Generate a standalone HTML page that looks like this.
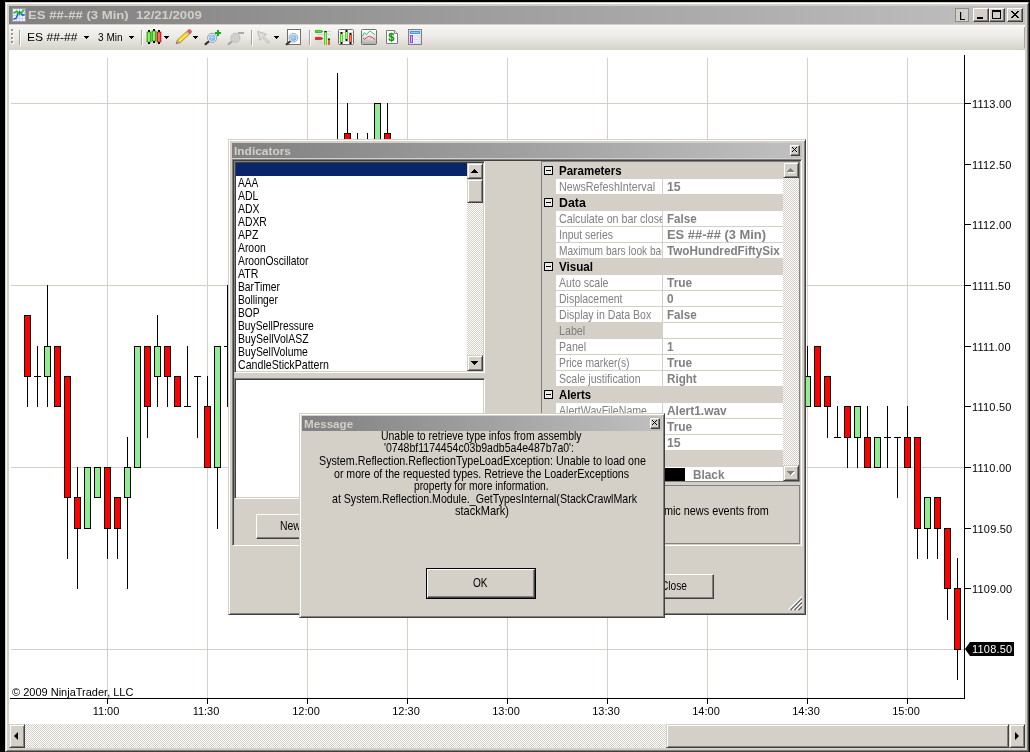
<!DOCTYPE html>
<html><head><meta charset="utf-8"><title>ES ##-## (3 Min)</title>
<style>
*{margin:0;padding:0;box-sizing:border-box}
html,body{width:1030px;height:752px;overflow:hidden;background:#000}
body{position:relative;font-family:"Liberation Sans",sans-serif;font-size:11px;color:#000}
i,span,div,b{position:absolute;display:block;font-style:normal;white-space:nowrap}
.face{background:#d4d0c8}
/* chart */
.w{width:1px;background:#000}
.b{width:7px;border:1px solid #000;box-sizing:content-box;width:5px}
.dj{width:7px;height:1px;background:#000}
.gv{top:58px;width:1px;height:640px;background:#d4d0c8}
.gh{left:11px;width:953px;height:1px;background:#d4d0c8}
.pt{left:965px;width:6px;height:1px;background:#000}
.pl{left:972px;font-size:11px;line-height:14px;letter-spacing:0.2px}
.tt{top:698px;width:1px;height:6px;background:#000}
.tl{top:704px;width:60px;text-align:center;font-size:11px;line-height:14px}
.chk{background-color:#fff;background-image:conic-gradient(#d4d0c8 25%,#fff 0 50%,#d4d0c8 0 75%,#fff 0);background-size:2px 2px}
/* raised button */
.rb{background:#d4d0c8;border:1px solid;border-color:#d4d0c8 #404040 #404040 #d4d0c8;box-shadow:inset 1px 1px 0 #fff,inset -1px -1px 0 #808080}
.rb2{background:#d4d0c8;border:1px solid;border-color:#fff #404040 #404040 #fff;box-shadow:inset -1px -1px 0 #808080}
.win{background:#d4d0c8;border:1px solid;border-color:#d4d0c8 #404040 #404040 #d4d0c8;box-shadow:inset 1px 1px 0 #fff,inset -1px -1px 0 #808080}
.sunk{border:1px solid;border-color:#808080 #fff #fff #808080;box-shadow:inset 1px 1px 0 #404040,inset -1px -1px 0 #d4d0c8}
.cap{font-weight:bold;color:#d4d0c8;font-size:11px;line-height:14px}
.ms{font-size:13px;line-height:13px}
.pgc{font-weight:bold;line-height:16px}
.pgn{color:#808080;line-height:16px}
.pgv{color:#808080;font-weight:bold;line-height:16px}
.mc{left:-220px;width:800px;text-align:center}
#root{left:0;top:0;width:1030px;height:752px;will-change:transform}
</style></head><body><div id="root">
<!-- main window frame -->
<div class="face" style="left:5px;top:2px;width:1024px;height:750px;border:1px solid;border-color:#d4d0c8 #404040 #404040 #d4d0c8;box-shadow:inset 1px 1px 0 #fff,inset -1px -1px 0 #808080"></div>
<!-- title bar -->
<div id="title" style="left:9px;top:6px;width:1016px;height:18px;background:linear-gradient(90deg,#808080,#c0c0c0)"></div>
<span id="ttext" style="transform:scaleX(1.194);transform-origin:0 0;left:28px;top:8px;font-weight:bold;color:#d4d0c8;font-size:11px;line-height:14px">ES ##-## (3 Min)&nbsp; 12/21/2009</span>
<svg style="position:absolute;left:12px;top:8px" width="14" height="14" viewBox="0 0 14 14"><rect x="0" y="0" width="14" height="14" fill="#9a9ab4"/><rect x="1" y="1" width="12" height="12" fill="#f4f2fb"/><path d="M4.5 1v12M7.5 1v12M10.5 1v12M1 4.5h12M1 7.5h12M1 10.5h12" stroke="#cfcfe6" stroke-width="1" fill="none"/><path d="M1.5 11.5L4.5 9.8L6 5.5L7.5 3.6L10.5 7.2L12.7 6.5" stroke="#1060e0" stroke-width="1.5" fill="none"/><path d="M1.5 5.3L4.7 3.3L7.5 6.3L12.5 1.5" stroke="#20c010" stroke-width="1.6" fill="none"/></svg>
<div style="left:955px;top:8px;width:14px;height:14px;background:#d4d0c8;border:1px solid #8c8c8c"></div>
<svg style="position:absolute;left:959px;top:12px" width="7" height="8"><path d="M1 0h1.2v7h3.8v1h-5z" fill="#000"/></svg>
<div class="rb2" style="left:973px;top:8px;width:16px;height:14px"></div>
<i style="left:977px;top:17px;width:6px;height:2px;background:#000"></i>
<div class="rb2" style="left:989px;top:8px;width:16px;height:14px"></div>
<div style="left:992px;top:10px;width:9px;height:9px;border:1px solid #000;border-top-width:2px"></div>
<div class="rb2" style="left:1007px;top:8px;width:16px;height:14px"></div>
<svg style="position:absolute;left:1011px;top:11px" width="8" height="7"><path d="M0 0h2v1h-2zM6 0h2v1h-2zM1 1h2v1h-2zM5 1h2v1h-2zM2 2h4v1h-4zM3 3h2v1h-2zM2 4h4v1h-4zM1 5h2v1h-2zM5 5h2v1h-2zM0 6h2v1h-2zM6 6h2v1h-2z" fill="#000"/></svg>
<!-- toolbar -->
<div id="tb" style="left:9px;top:24px;width:1016px;height:26px;background:#d4d0c8"></div>
<div id="tbg" style="left:9px;top:25px;width:1015px;height:25px;background:linear-gradient(#f8f7f5,#ebe9e4 50%,#d6d2ca);border-radius:0 2px 3px 3px"></div>
<i style="left:1024px;top:27px;width:1px;height:21px;background:#aaa69e"></i><i style="left:1023px;top:25px;width:2px;height:2px;background:#fff"></i>
<span id="tb1" style="transform:scaleX(1.100);transform-origin:0 0;left:27px;top:30px;font-size:11px;line-height:14px">ES ##-##</span>
<span id="tb2" style="transform:scaleX(0.914);transform-origin:0 0;left:98px;top:30px;font-size:11px;line-height:14px">3 Min</span>
<svg style="position:absolute;left:0;top:0" width="1030" height="52" viewBox="0 0 1030 52">
<defs>
<linearGradient id="gg" x1="0" x2="1" y1="0" y2="0"><stop offset="0" stop-color="#2fb010"/><stop offset="0.45" stop-color="#a8ff78"/><stop offset="1" stop-color="#35c015"/></linearGradient>
<linearGradient id="gr" x1="0" x2="1" y1="0" y2="0"><stop offset="0" stop-color="#c81808"/><stop offset="0.45" stop-color="#ff8878"/><stop offset="1" stop-color="#d82010"/></linearGradient>
<linearGradient id="gc" x1="0" x2="0" y1="0" y2="1"><stop offset="0" stop-color="#ffffff"/><stop offset="0.5" stop-color="#e4e4e4"/><stop offset="1" stop-color="#a8a8a8"/></linearGradient>
<radialGradient id="gl" cx="0.45" cy="0.4" r="0.6"><stop offset="0" stop-color="#b8dcfa"/><stop offset="1" stop-color="#6eb0ea"/></radialGradient>
</defs>
<!-- grip -->
<g fill="#fff"><rect x="12" y="30" width="2" height="2"/><rect x="12" y="34" width="2" height="2"/><rect x="12" y="38" width="2" height="2"/><rect x="12" y="42" width="2" height="2"/></g>
<g fill="#9a968c"><rect x="11" y="29" width="2" height="2"/><rect x="11" y="33" width="2" height="2"/><rect x="11" y="37" width="2" height="2"/><rect x="11" y="41" width="2" height="2"/></g>
<!-- separators -->
<g fill="#a5a29a"><rect x="19" y="30" width="1" height="15"/><rect x="141" y="30" width="1" height="15"/><rect x="251" y="30" width="1" height="15"/><rect x="309" y="30" width="1" height="15"/></g>
<g fill="#fff"><rect x="20" y="31" width="1" height="15"/><rect x="142" y="31" width="1" height="15"/><rect x="252" y="31" width="1" height="15"/><rect x="310" y="31" width="1" height="15"/></g>
<!-- dropdown arrows -->
<g fill="#000">
<path d="M84 36h5v1h-5zM85 37h3v1h-3zM86 38h1v1h-1z"/>
<path d="M129 36h5v1h-5zM130 37h3v1h-3zM131 38h1v1h-1z"/>
<path d="M164 36h5v1h-5zM165 37h3v1h-3zM166 38h1v1h-1z"/>
<path d="M193 36h5v1h-5zM194 37h3v1h-3zM195 38h1v1h-1z"/>
<path d="M274 36h5v1h-5zM275 37h3v1h-3zM276 38h1v1h-1z"/>
</g>
<!-- chart style icon -->
<g>
<rect x="148" y="30" width="2" height="14" fill="#000"/><rect x="153" y="29" width="2" height="14" fill="#000"/><rect x="158" y="30" width="2" height="14" fill="#000"/>
<rect x="147" y="32" width="4" height="10" fill="url(#gg)" stroke="#1c7808" stroke-width="0.6"/>
<rect x="152" y="31" width="4" height="10" fill="url(#gg)" stroke="#1c7808" stroke-width="0.6"/>
<rect x="157" y="32" width="4" height="10" fill="url(#gr)" stroke="#901008" stroke-width="0.6"/>
</g>
<!-- pencil -->
<g transform="translate(176.2,43.6) rotate(-42)">
<path d="M0 0 L3.2 -2 L3.2 2 Z" fill="#c9a98a" stroke="#777" stroke-width="0.5"/>
<path d="M0 0 L1.2 -0.75 L1.2 0.75 Z" fill="#333"/>
<rect x="3.2" y="-2" width="12.3" height="4" fill="#f7d416" stroke="#8a7a30" stroke-width="0.6"/>
<rect x="3.2" y="-0.6" width="12.3" height="1.2" fill="#ffe860"/>
<rect x="15.5" y="-2" width="1.2" height="4" fill="#c8c8c8" stroke="#888" stroke-width="0.4"/>
<path d="M16.7 -2 h1.6 a1.6 2 0 0 1 0 4 h-1.6z" fill="#f05565" stroke="#b03040" stroke-width="0.4"/>
</g>
<!-- zoom in -->
<path d="M209.3 41 L205.6 44.2" stroke="#333" stroke-width="2.2" stroke-linecap="round"/>
<circle cx="212.2" cy="37.8" r="4.6" fill="#f4f4f4" stroke="#9a9a9a" stroke-width="1"/>
<circle cx="212.2" cy="37.8" r="3.2" fill="url(#gl)"/>
<path d="M215 32h6v2h-6zM217 30h2v6h-2z" fill="#08b020"/>
<!-- zoom out disabled -->
<path d="M232.3 41 L228.6 44.2" stroke="#a8a8a8" stroke-width="2.2" stroke-linecap="round"/>
<circle cx="235.4" cy="37.8" r="4.6" fill="#cfcfcf" stroke="#c0c0c0" stroke-width="1"/>
<rect x="238" y="32" width="6" height="2" fill="#a8a8a8"/>
<!-- cursor -->
<path d="M257.6 31.3 L266.4 34.2 L263.6 36.2 L269.3 42 L268 43.4 L262.2 37.6 L260 40.4 Z" fill="#dedede" stroke="#b0b0b0" stroke-width="0.8" stroke-linejoin="round"/>
<!-- zoom box -->
<rect x="287.5" y="29.5" width="13" height="15" fill="#fff" stroke="#707070" stroke-width="1"/>
<path d="M290.3 41.2 L286.6 44.3" stroke="#333" stroke-width="2" stroke-linecap="round"/>
<circle cx="293.4" cy="37.8" r="4.4" fill="#f0f0f0" stroke="#a8a8a8" stroke-width="1"/>
<circle cx="293.4" cy="37.8" r="3.1" fill="url(#gl)"/>
<!-- icon A -->
<g>
<path d="M327 31.5h4M317 34.5h14M327 38.5h4M317 42.5h6" stroke="#d4d4d4" stroke-width="1"/>
<path d="M315.5 30.4h5.6l1.8 1.1l-1.8 1.1h-5.6z" fill="#48e818" stroke="#289010" stroke-width="0.7"/>
<path d="M315.5 37.4h5.6l1.8 1.1l-1.8 1.1h-5.6z" fill="#f02818" stroke="#a01810" stroke-width="0.7"/>
<rect x="324" y="31" width="3" height="14" fill="url(#gg)"/><rect x="324.5" y="31" width="2" height="1.3" fill="#111"/>
<rect x="328" y="39" width="2" height="6" fill="url(#gr)"/><rect x="328" y="38.6" width="2" height="1.2" fill="#111"/>
</g>
<!-- icon B -->
<g>
<rect x="338.5" y="29.5" width="15" height="15" rx="1" fill="#fff" stroke="#707070"/>
<path d="M339 32.5h14M339 35.5h14M339 38.5h14M339 41.5h14" stroke="#dcdcdc" stroke-width="1"/>
<rect x="340.5" y="32" width="2" height="12" fill="#000"/><rect x="345.5" y="30" width="2" height="11" fill="#000"/><rect x="349.5" y="33" width="2" height="11" fill="#000"/>
<rect x="340" y="34" width="3" height="8" fill="url(#gg)"/><rect x="345" y="32" width="3" height="7" fill="url(#gg)"/><rect x="349" y="35" width="3" height="7" fill="url(#gr)"/>
</g>
<!-- icon C -->
<g>
<rect x="361.5" y="29.5" width="15" height="15" rx="1" fill="url(#gc)" stroke="#707070"/>
<path d="M362.3 36.5L364.4 32.6L366.1 34.7L370 31L374.9 34.7" stroke="#30b870" stroke-width="0.9" fill="none"/>
<path d="M363 37.9L364.4 39.3L368.2 36.5L372.1 37.2L375.2 39.6" stroke="#e83040" stroke-width="0.9" fill="none"/>
</g>
<!-- icon D -->
<g>
<path d="M386.5 30.5h8l3 3v10h-11z" fill="#fff" stroke="#7c7c7c"/>
<path d="M394.5 30.5v3h3" fill="#e8e8e8" stroke="#707070" stroke-width="0.8"/>
<text x="388.6" y="40.9" font-family="Liberation Sans, sans-serif" font-weight="bold" font-size="10.5" fill="#139a13" stroke="#139a13" stroke-width="0.3">$</text>
</g>
<!-- icon E -->
<g>
<rect x="408.5" y="29.5" width="13" height="15" fill="#fff" stroke="#808080"/>
<rect x="409.5" y="30.5" width="11" height="13" fill="none" stroke="#dcd8f4" stroke-width="1"/>
<rect x="410" y="31" width="10" height="3" fill="#3f9ee0"/><rect x="411" y="32" width="8" height="1" fill="#8cc8f0"/>
<rect x="410" y="35" width="3" height="8" fill="#a040ff"/><rect x="411" y="36" width="1" height="6" fill="#cdb8ff"/>
<rect x="414" y="35" width="6" height="8" fill="#eef0fa"/><path d="M414 35.5h6M414 37.5h2M417 37.5h3M414 39.5h4M419 39.5h1M414 41.5h2M417 41.5h3" stroke="#d2d8ee" stroke-width="1"/>
</g>
</svg>

<!-- chart bg -->
<div style="left:9px;top:50px;width:1016px;height:674px;background:#fff"></div>
<i class="gv" style="left:107px"></i>
<i class="gv" style="left:207px"></i>
<i class="gv" style="left:307px"></i>
<i class="gv" style="left:407px"></i>
<i class="gv" style="left:507px"></i>
<i class="gv" style="left:607px"></i>
<i class="gv" style="left:707px"></i>
<i class="gv" style="left:807px"></i>
<i class="gv" style="left:907px"></i>
<i class="gh" style="top:103px"></i>
<i class="gh" style="top:285px"></i>
<i class="gh" style="top:467px"></i>
<i class="gh" style="top:649px"></i>
<i class="w" style="left:27px;top:315px;height:92px"></i>
<i class="b" style="left:24px;top:315px;height:60px;background:#ff0000"></i>
<i class="w" style="left:37px;top:346px;height:61px"></i>
<i class="dj" style="left:34px;top:376px"></i>
<i class="w" style="left:47px;top:285px;height:122px"></i>
<i class="b" style="left:44px;top:346px;height:29px;background:#90ee90"></i>
<i class="w" style="left:57px;top:346px;height:61px"></i>
<i class="b" style="left:54px;top:346px;height:59px;background:#ff0000"></i>
<i class="w" style="left:67px;top:376px;height:183px"></i>
<i class="b" style="left:64px;top:376px;height:120px;background:#ff0000"></i>
<i class="w" style="left:77px;top:467px;height:122px"></i>
<i class="b" style="left:74px;top:497px;height:30px;background:#ff0000"></i>
<i class="w" style="left:87px;top:467px;height:62px"></i>
<i class="b" style="left:84px;top:467px;height:60px;background:#90ee90"></i>
<i class="w" style="left:97px;top:467px;height:31px"></i>
<i class="b" style="left:94px;top:467px;height:29px;background:#90ee90"></i>
<i class="w" style="left:107px;top:467px;height:92px"></i>
<i class="b" style="left:104px;top:467px;height:60px;background:#ff0000"></i>
<i class="w" style="left:117px;top:497px;height:62px"></i>
<i class="b" style="left:114px;top:497px;height:30px;background:#ff0000"></i>
<i class="w" style="left:127px;top:437px;height:152px"></i>
<i class="b" style="left:124px;top:467px;height:29px;background:#90ee90"></i>
<i class="w" style="left:137px;top:346px;height:122px"></i>
<i class="b" style="left:134px;top:346px;height:120px;background:#90ee90"></i>
<i class="w" style="left:147px;top:346px;height:92px"></i>
<i class="b" style="left:144px;top:346px;height:59px;background:#ff0000"></i>
<i class="w" style="left:157px;top:315px;height:92px"></i>
<i class="b" style="left:154px;top:346px;height:29px;background:#90ee90"></i>
<i class="w" style="left:167px;top:346px;height:61px"></i>
<i class="b" style="left:164px;top:346px;height:29px;background:#ff0000"></i>
<i class="w" style="left:177px;top:376px;height:31px"></i>
<i class="b" style="left:174px;top:376px;height:29px;background:#ff0000"></i>
<i class="w" style="left:187px;top:346px;height:61px"></i>
<i class="dj" style="left:184px;top:406px"></i>
<i class="w" style="left:197px;top:376px;height:62px"></i>
<i class="dj" style="left:194px;top:376px"></i>
<i class="w" style="left:207px;top:376px;height:92px"></i>
<i class="b" style="left:204px;top:406px;height:60px;background:#ff0000"></i>
<i class="w" style="left:217px;top:346px;height:183px"></i>
<i class="b" style="left:214px;top:346px;height:120px;background:#90ee90"></i>
<i class="w" style="left:227px;top:285px;height:122px"></i>
<i class="dj" style="left:224px;top:346px"></i>
<i class="w" style="left:337px;top:73px;height:152px"></i>
<i class="dj" style="left:334px;top:164px"></i>
<i class="w" style="left:347px;top:103px;height:92px"></i>
<i class="b" style="left:344px;top:133px;height:60px;background:#ff0000"></i>
<i class="w" style="left:357px;top:133px;height:62px"></i>
<i class="dj" style="left:354px;top:164px"></i>
<i class="w" style="left:367px;top:133px;height:62px"></i>
<i class="dj" style="left:364px;top:164px"></i>
<i class="w" style="left:377px;top:103px;height:62px"></i>
<i class="b" style="left:374px;top:103px;height:60px;background:#90ee90"></i>
<i class="w" style="left:387px;top:103px;height:62px"></i>
<i class="b" style="left:384px;top:133px;height:30px;background:#ff0000"></i>
<i class="w" style="left:807px;top:346px;height:61px"></i>
<i class="b" style="left:804px;top:376px;height:29px;background:#90ee90"></i>
<i class="w" style="left:817px;top:346px;height:61px"></i>
<i class="b" style="left:814px;top:346px;height:59px;background:#ff0000"></i>
<i class="w" style="left:827px;top:376px;height:62px"></i>
<i class="b" style="left:824px;top:376px;height:29px;background:#ff0000"></i>
<i class="w" style="left:837px;top:406px;height:32px"></i>
<i class="dj" style="left:834px;top:437px"></i>
<i class="w" style="left:847px;top:406px;height:62px"></i>
<i class="b" style="left:844px;top:406px;height:30px;background:#ff0000"></i>
<i class="w" style="left:857px;top:406px;height:62px"></i>
<i class="b" style="left:854px;top:406px;height:30px;background:#90ee90"></i>
<i class="w" style="left:867px;top:406px;height:62px"></i>
<i class="b" style="left:864px;top:437px;height:29px;background:#ff0000"></i>
<i class="w" style="left:877px;top:437px;height:31px"></i>
<i class="b" style="left:874px;top:437px;height:29px;background:#90ee90"></i>
<i class="w" style="left:887px;top:406px;height:62px"></i>
<i class="dj" style="left:884px;top:437px"></i>
<i class="w" style="left:897px;top:437px;height:61px"></i>
<i class="dj" style="left:894px;top:437px"></i>
<i class="w" style="left:907px;top:406px;height:62px"></i>
<i class="b" style="left:904px;top:437px;height:29px;background:#ff0000"></i>
<i class="w" style="left:917px;top:437px;height:122px"></i>
<i class="b" style="left:914px;top:437px;height:90px;background:#ff0000"></i>
<i class="w" style="left:927px;top:497px;height:62px"></i>
<i class="b" style="left:924px;top:497px;height:30px;background:#90ee90"></i>
<i class="w" style="left:937px;top:497px;height:62px"></i>
<i class="b" style="left:934px;top:497px;height:30px;background:#ff0000"></i>
<i class="w" style="left:947px;top:528px;height:92px"></i>
<i class="b" style="left:944px;top:528px;height:59px;background:#ff0000"></i>
<i class="w" style="left:957px;top:558px;height:122px"></i>
<i class="b" style="left:954px;top:588px;height:60px;background:#ff0000"></i>
<i style="left:964px;top:55px;width:1px;height:644px;background:#000"></i>
<i style="left:10px;top:698px;width:955px;height:1px;background:#000"></i>
<i class="pt" style="top:103px"></i><span class="pl" style="top:97px">1113.00</span>
<i class="pt" style="top:164px"></i><span class="pl" style="top:158px">1112.50</span>
<i class="pt" style="top:224px"></i><span class="pl" style="top:218px">1112.00</span>
<i class="pt" style="top:285px"></i><span class="pl" style="top:279px">1111.50</span>
<i class="pt" style="top:346px"></i><span class="pl" style="top:340px">1111.00</span>
<i class="pt" style="top:406px"></i><span class="pl" style="top:400px">1110.50</span>
<i class="pt" style="top:467px"></i><span class="pl" style="top:461px">1110.00</span>
<i class="pt" style="top:528px"></i><span class="pl" style="top:522px">1109.50</span>
<i class="pt" style="top:588px"></i><span class="pl" style="top:582px">1109.00</span>
<i class="tt" style="left:107px"></i><span class="tl" style="left:76px">11:00</span>
<i class="tt" style="left:207px"></i><span class="tl" style="left:176px">11:30</span>
<i class="tt" style="left:307px"></i><span class="tl" style="left:276px">12:00</span>
<i class="tt" style="left:407px"></i><span class="tl" style="left:376px">12:30</span>
<i class="tt" style="left:507px"></i><span class="tl" style="left:476px">13:00</span>
<i class="tt" style="left:607px"></i><span class="tl" style="left:576px">13:30</span>
<i class="tt" style="left:707px"></i><span class="tl" style="left:676px">14:00</span>
<i class="tt" style="left:807px"></i><span class="tl" style="left:776px">14:30</span>
<i class="tt" style="left:907px"></i><span class="tl" style="left:876px">15:00</span>
<span id="copy" style="left:12px;top:685px;font-size:11px;line-height:14px">© 2009 NinjaTrader, LLC</span>
<!-- price marker -->
<svg style="position:absolute;left:964px;top:641px" width="52" height="16"><path d="M1 8 L6 1 H50 V15 H6 Z" fill="#000"/></svg>
<span style="left:972px;top:642px;color:#fff;font-size:11px;line-height:14px;letter-spacing:0.2px">1108.50</span>
<!-- h scrollbar -->
<div class="chk" style="left:9px;top:724px;width:1016px;height:24px"></div>
<div class="rb" style="left:9px;top:724px;width:16px;height:24px"></div>
<svg style="position:absolute;left:14px;top:732px" width="5" height="8"><path d="M4 0 V8 L0 4 Z" fill="#000"/></svg>
<div class="rb" style="left:1009px;top:724px;width:16px;height:24px"></div>
<svg style="position:absolute;left:1015px;top:732px" width="5" height="8"><path d="M0 0 V8 L4 4 Z" fill="#000"/></svg>
<div class="rb" style="left:666px;top:724px;width:343px;height:24px"></div>
<!-- ===== Indicators dialog ===== -->
<div class="win" style="left:228px;top:139px;width:578px;height:476px"></div>
<div style="left:232px;top:143px;width:570px;height:15px;background:linear-gradient(90deg,#808080,#c0c0c0)"></div>
<span id="t_ind" class="cap" style="transform:scaleX(1.084);transform-origin:0 0;left:234px;top:144px">Indicators</span>
<div class="rb2" style="left:790px;top:145px;width:10px;height:11px"></div>
<svg style="position:absolute;left:792px;top:147px" width="5" height="5"><path d="M0 0h1v1h-1zM4 0h1v1h-1zM1 1h1v1h-1zM3 1h1v1h-1zM2 2h1v1h-1zM1 3h1v1h-1zM3 3h1v1h-1zM0 4h1v1h-1zM4 4h1v1h-1z" fill="#000"/></svg>
<!-- sunken panel -->
<div class="sunk" style="left:232px;top:159px;width:570px;height:387px;background:#d4d0c8"></div>
<!-- list box -->
<div class="sunk" style="left:234px;top:161px;width:251px;height:212px;background:#fff"></div>
<div style="left:236px;top:163px;width:231px;height:13px;background:#0a246a"></div>
<span class="ms" style="transform:scaleX(0.785);transform-origin:0 0;left:238px;top:176px">AAA</span>
<span class="ms" style="transform:scaleX(0.806);transform-origin:0 0;left:238px;top:189px">ADL</span>
<span class="ms" style="transform:scaleX(0.809);transform-origin:0 0;left:238px;top:202px">ADX</span>
<span class="ms" style="transform:scaleX(0.798);transform-origin:0 0;left:238px;top:215px">ADXR</span>
<span class="ms" style="transform:scaleX(0.806);transform-origin:0 0;left:238px;top:228px">APZ</span>
<span class="ms" style="transform:scaleX(0.798);transform-origin:0 0;left:238px;top:241px">Aroon</span>
<span class="ms" style="transform:scaleX(0.793);transform-origin:0 0;left:238px;top:254px">AroonOscillator</span>
<span class="ms" style="transform:scaleX(0.816);transform-origin:0 0;left:238px;top:267px">ATR</span>
<span class="ms" style="transform:scaleX(0.792);transform-origin:0 0;left:238px;top:280px">BarTimer</span>
<span class="ms" style="transform:scaleX(0.789);transform-origin:0 0;left:238px;top:293px">Bollinger</span>
<span class="ms" style="transform:scaleX(0.785);transform-origin:0 0;left:238px;top:306px">BOP</span>
<span class="ms" style="transform:scaleX(0.788);transform-origin:0 0;left:238px;top:319px">BuySellPressure</span>
<span class="ms" style="transform:scaleX(0.807);transform-origin:0 0;left:238px;top:332px">BuySellVolASZ</span>
<span class="ms" style="transform:scaleX(0.799);transform-origin:0 0;left:238px;top:345px">BuySellVolume</span>
<span class="ms" style="transform:scaleX(0.817);transform-origin:0 0;left:238px;top:358px">CandleStickPattern</span>
<div class="chk" style="left:467px;top:163px;width:16px;height:208px"></div>
<div class="rb" style="left:467px;top:163px;width:16px;height:16px"></div>
<svg style="position:absolute;left:471px;top:169px" width="7" height="4"><path d="M3 0h1v1h-1zM2 1h3v1h-3zM1 2h5v1h-5zM0 3h7v1h-7z" fill="#000"/></svg>
<div class="rb" style="left:467px;top:179px;width:16px;height:24px"></div>
<div class="rb" style="left:467px;top:355px;width:16px;height:16px"></div>
<svg style="position:absolute;left:471px;top:361px" width="7" height="4"><path d="M0 0h7v1h-7zM1 1h5v1h-5zM2 2h3v1h-3zM3 3h1v1h-1z" fill="#000"/></svg>
<!-- text box -->
<div class="sunk" style="left:234px;top:378px;width:251px;height:121px;background:#fff"></div>
<!-- New button -->
<div class="rb2" style="left:256px;top:514px;width:75px;height:25px"></div>
<span id="b_new" class="ms" style="transform:scaleX(0.800);transform-origin:0 0;left:280px;top:519px">New</span>
<!-- property grid -->
<div style="left:541px;top:161px;width:259px;height:321px;background:#d4d0c8;border:1px solid #808080"></div>
<svg style="position:absolute;left:544px;top:166px" width="9" height="9"><rect x="0.5" y="0.5" width="8" height="8" fill="#eceae6" stroke="#000"/><path d="M2 4h5v1h-5z" fill="#000"/></svg>
<span class="ms pgc" style="transform:scaleX(0.884);transform-origin:0 0;left:559px;top:163px">Parameters</span>
<div style="left:556px;top:179px;width:106px;height:15px;background:#fff;overflow:hidden"><span class="ms pgn" style="transform:scaleX(0.826);transform-origin:0 0;left:3px;top:0px">NewsRefeshInterval</span></div>
<div style="left:663px;top:179px;width:120px;height:15px;background:#fff;overflow:hidden"><span class="ms pgv" style="transform:scaleX(0.945);transform-origin:0 0;left:4px;top:0px">15</span></div>
<svg style="position:absolute;left:544px;top:198px" width="9" height="9"><rect x="0.5" y="0.5" width="8" height="8" fill="#eceae6" stroke="#000"/><path d="M2 4h5v1h-5z" fill="#000"/></svg>
<span class="ms pgc" style="transform:scaleX(0.950);transform-origin:0 0;left:559px;top:195px">Data</span>
<div style="left:556px;top:211px;width:106px;height:15px;background:#fff;overflow:hidden"><span class="ms pgn" style="transform:scaleX(0.824);transform-origin:0 0;left:3px;top:0px">Calculate on bar close</span></div>
<div style="left:663px;top:211px;width:120px;height:15px;background:#fff;overflow:hidden"><span class="ms pgv" style="transform:scaleX(0.892);transform-origin:0 0;left:4px;top:0px">False</span></div>
<div style="left:556px;top:227px;width:106px;height:15px;background:#fff;overflow:hidden"><span class="ms pgn" style="transform:scaleX(0.802);transform-origin:0 0;left:3px;top:0px">Input series</span></div>
<div style="left:663px;top:227px;width:120px;height:15px;background:#fff;overflow:hidden"><span class="ms pgv" style="transform:scaleX(0.993);transform-origin:0 0;left:4px;top:0px">ES ##-## (3 Min)</span></div>
<div style="left:556px;top:243px;width:106px;height:15px;background:#fff;overflow:hidden"><span class="ms pgn" style="transform:scaleX(0.782);transform-origin:0 0;left:3px;top:0px">Maximum bars look back</span></div>
<div style="left:663px;top:243px;width:120px;height:15px;background:#fff;overflow:hidden"><span class="ms pgv" style="transform:scaleX(0.899);transform-origin:0 0;left:4px;top:0px">TwoHundredFiftySix</span></div>
<svg style="position:absolute;left:544px;top:262px" width="9" height="9"><rect x="0.5" y="0.5" width="8" height="8" fill="#eceae6" stroke="#000"/><path d="M2 4h5v1h-5z" fill="#000"/></svg>
<span class="ms pgc" style="transform:scaleX(0.895);transform-origin:0 0;left:559px;top:259px">Visual</span>
<div style="left:556px;top:275px;width:106px;height:15px;background:#fff;overflow:hidden"><span class="ms pgn" style="transform:scaleX(0.815);transform-origin:0 0;left:3px;top:0px">Auto scale</span></div>
<div style="left:663px;top:275px;width:120px;height:15px;background:#fff;overflow:hidden"><span class="ms pgv" style="transform:scaleX(0.920);transform-origin:0 0;left:4px;top:0px">True</span></div>
<div style="left:556px;top:291px;width:106px;height:15px;background:#fff;overflow:hidden"><span class="ms pgn" style="transform:scaleX(0.806);transform-origin:0 0;left:3px;top:0px">Displacement</span></div>
<div style="left:663px;top:291px;width:120px;height:15px;background:#fff;overflow:hidden"><span class="ms pgv" style="transform:scaleX(0.914);transform-origin:0 0;left:4px;top:0px">0</span></div>
<div style="left:556px;top:307px;width:106px;height:15px;background:#fff;overflow:hidden"><span class="ms pgn" style="transform:scaleX(0.813);transform-origin:0 0;left:3px;top:0px">Display in Data Box</span></div>
<div style="left:663px;top:307px;width:120px;height:15px;background:#fff;overflow:hidden"><span class="ms pgv" style="transform:scaleX(0.892);transform-origin:0 0;left:4px;top:0px">False</span></div>
<div style="left:556px;top:323px;width:106px;height:15px;background:#d4d0c8;overflow:hidden"><span class="ms pgn" style="transform:scaleX(0.824);transform-origin:0 0;left:3px;top:0px">Label</span></div>
<div style="left:663px;top:323px;width:120px;height:15px;background:#fff;overflow:hidden"><span class="ms pgv" style="transform:scaleX(0.914);transform-origin:0 0;left:4px;top:0px"></span></div>
<div style="left:556px;top:339px;width:106px;height:15px;background:#fff;overflow:hidden"><span class="ms pgn" style="transform:scaleX(0.814);transform-origin:0 0;left:3px;top:0px">Panel</span></div>
<div style="left:663px;top:339px;width:120px;height:15px;background:#fff;overflow:hidden"><span class="ms pgv" style="transform:scaleX(0.914);transform-origin:0 0;left:4px;top:0px">1</span></div>
<div style="left:556px;top:355px;width:106px;height:15px;background:#fff;overflow:hidden"><span class="ms pgn" style="transform:scaleX(0.794);transform-origin:0 0;left:3px;top:0px">Price marker(s)</span></div>
<div style="left:663px;top:355px;width:120px;height:15px;background:#fff;overflow:hidden"><span class="ms pgv" style="transform:scaleX(0.920);transform-origin:0 0;left:4px;top:0px">True</span></div>
<div style="left:556px;top:371px;width:106px;height:15px;background:#fff;overflow:hidden"><span class="ms pgn" style="transform:scaleX(0.812);transform-origin:0 0;left:3px;top:0px">Scale justification</span></div>
<div style="left:663px;top:371px;width:120px;height:15px;background:#fff;overflow:hidden"><span class="ms pgv" style="transform:scaleX(0.895);transform-origin:0 0;left:4px;top:0px">Right</span></div>
<svg style="position:absolute;left:544px;top:390px" width="9" height="9"><rect x="0.5" y="0.5" width="8" height="8" fill="#eceae6" stroke="#000"/><path d="M2 4h5v1h-5z" fill="#000"/></svg>
<span class="ms pgc" style="transform:scaleX(0.867);transform-origin:0 0;left:559px;top:387px">Alerts</span>
<div style="left:556px;top:403px;width:106px;height:15px;background:#fff;overflow:hidden"><span class="ms pgn" style="transform:scaleX(0.816);transform-origin:0 0;left:3px;top:0px">AlertWavFileName</span></div>
<div style="left:663px;top:403px;width:120px;height:15px;background:#fff;overflow:hidden"><span class="ms pgv" style="transform:scaleX(0.918);transform-origin:0 0;left:4px;top:0px">Alert1.wav</span></div>
<div style="left:556px;top:419px;width:106px;height:15px;background:#fff;overflow:hidden"><span class="ms pgn" style="transform:scaleX(0.811);transform-origin:0 0;left:3px;top:0px">AlertSound</span></div>
<div style="left:663px;top:419px;width:120px;height:15px;background:#fff;overflow:hidden"><span class="ms pgv" style="transform:scaleX(0.920);transform-origin:0 0;left:4px;top:0px">True</span></div>
<div style="left:556px;top:435px;width:106px;height:15px;background:#fff;overflow:hidden"><span class="ms pgn" style="transform:scaleX(0.811);transform-origin:0 0;left:3px;top:0px">AlertInterval</span></div>
<div style="left:663px;top:435px;width:120px;height:15px;background:#fff;overflow:hidden"><span class="ms pgv" style="transform:scaleX(0.945);transform-origin:0 0;left:4px;top:0px">15</span></div>
<svg style="position:absolute;left:544px;top:454px" width="9" height="9"><rect x="0.5" y="0.5" width="8" height="8" fill="#eceae6" stroke="#000"/><path d="M2 4h5v1h-5z" fill="#000"/></svg>
<span class="ms pgc" style="transform:scaleX(0.895);transform-origin:0 0;left:559px;top:451px">Plots</span>
<div style="left:556px;top:467px;width:106px;height:14px;background:#fff;overflow:hidden"><span class="ms pgn" style="transform:scaleX(0.811);transform-origin:0 0;left:3px;top:0px">Color</span></div>
<div style="left:663px;top:467px;width:120px;height:14px;background:#fff;overflow:hidden"><i style="left:1px;top:1px;width:21px;height:13px;background:#000"></i><span class="ms pgv" style="transform:scaleX(0.908);transform-origin:0 0;left:30px;top:0px">Black</span></div>
<div class="chk" style="left:783px;top:162px;width:16px;height:319px"></div>
<div class="rb" style="left:783px;top:162px;width:16px;height:16px"></div>
<svg style="position:absolute;left:787px;top:168px" width="8" height="5"><path d="M3 0h1v1h-1zM2 1h3v1h-3zM1 2h5v1h-5zM0 3h7v1h-7z" fill="#808080"/><path d="M1 4h7v1h-7z" fill="#fff"/></svg>
<div class="rb" style="left:783px;top:465px;width:16px;height:16px"></div>
<svg style="position:absolute;left:787px;top:471px" width="8" height="5"><path d="M1 1h7v1h-7zM2 2h5v1h-5zM3 3h3v1h-3zM4 4h1v1h-1z" fill="#fff"/><path d="M0 0h7v1h-7zM1 1h5v1h-5zM2 2h3v1h-3zM3 3h1v1h-1z" fill="#808080"/></svg>
<!-- description pane -->
<div style="left:541px;top:485px;width:259px;height:59px;border:1px solid #808080;background:#d4d0c8"></div>
<span id="d_desc" class="ms" style="transform:scaleX(0.835);transform-origin:100% 0;right:261px;top:504px">Displays economic news events from</span>
<!-- Close button -->
<div class="rb2" style="left:639px;top:574px;width:75px;height:25px"></div>
<span id="b_close" class="ms" style="transform:scaleX(0.780);transform-origin:0 0;left:661px;top:579px">Close</span>
<!-- size grip -->
<svg style="position:absolute;left:786px;top:594px" width="16" height="17" viewBox="786 594 16 17"><path d="M790.3 610L802 598.3M794.3 610L802 602.3M798.3 610L802 606.3" stroke="#707070" stroke-width="2" fill="none"/><path d="M788.5 610L802 596.5M792.5 610L802 600.5M796.5 610L802 604.5" stroke="#fff" stroke-width="1.1" fill="none"/></svg>
<!-- ===== Message dialog ===== -->
<div class="win" style="left:299px;top:413px;width:366px;height:205px"></div>
<div style="left:302px;top:416px;width:360px;height:15px;background:linear-gradient(90deg,#808080,#c0c0c0)"></div>
<span id="t_msg" class="cap" style="transform:scaleX(1.058);transform-origin:0 0;left:304px;top:417px">Message</span>
<div class="rb2" style="left:650px;top:418px;width:10px;height:11px"></div>
<svg style="position:absolute;left:652px;top:420px" width="5" height="5"><path d="M0 0h1v1h-1zM4 0h1v1h-1zM1 1h1v1h-1zM3 1h1v1h-1zM2 2h1v1h-1zM1 3h1v1h-1zM3 3h1v1h-1zM0 4h1v1h-1zM4 4h1v1h-1z" fill="#000"/></svg>
<div style="left:302px;top:431px;width:360px;height:100px;overflow:hidden">
<span class="ms" style="transform:scaleX(0.802);transform-origin:0 0;left:78.8px;top:-2px">Unable to retrieve type infos from assembly</span>
<span class="ms" style="transform:scaleX(0.810);transform-origin:0 0;left:82.0px;top:10px">'0748bf1174454c03b9adb5a4e487b7a0':</span>
<span class="ms" style="transform:scaleX(0.824);transform-origin:0 0;left:16.5px;top:23px">System.Reflection.ReflectionTypeLoadException: Unable to load one</span>
<span class="ms" style="transform:scaleX(0.815);transform-origin:0 0;left:31.6px;top:36px">or more of the requested types. Retrieve the LoaderExceptions</span>
<span class="ms" style="transform:scaleX(0.786);transform-origin:0 0;left:111.7px;top:48px">property for more information.</span>
<span class="ms" style="transform:scaleX(0.815);transform-origin:0 0;left:29.6px;top:61px">at System.Reflection.Module._GetTypesInternal(StackCrawlMark</span>
<span class="ms" style="transform:scaleX(0.849);transform-origin:0 0;left:152.5px;top:73px">stackMark)</span>
</div>
<!-- OK button (default) -->
<div style="left:426px;top:568px;width:110px;height:31px;background:#000"></div>
<div class="rb2" style="left:427px;top:569px;width:108px;height:29px"></div>
<span id="b_ok" class="ms" style="transform:scaleX(0.777);transform-origin:0 0;left:473px;top:576px">OK</span>

</div></body></html>
